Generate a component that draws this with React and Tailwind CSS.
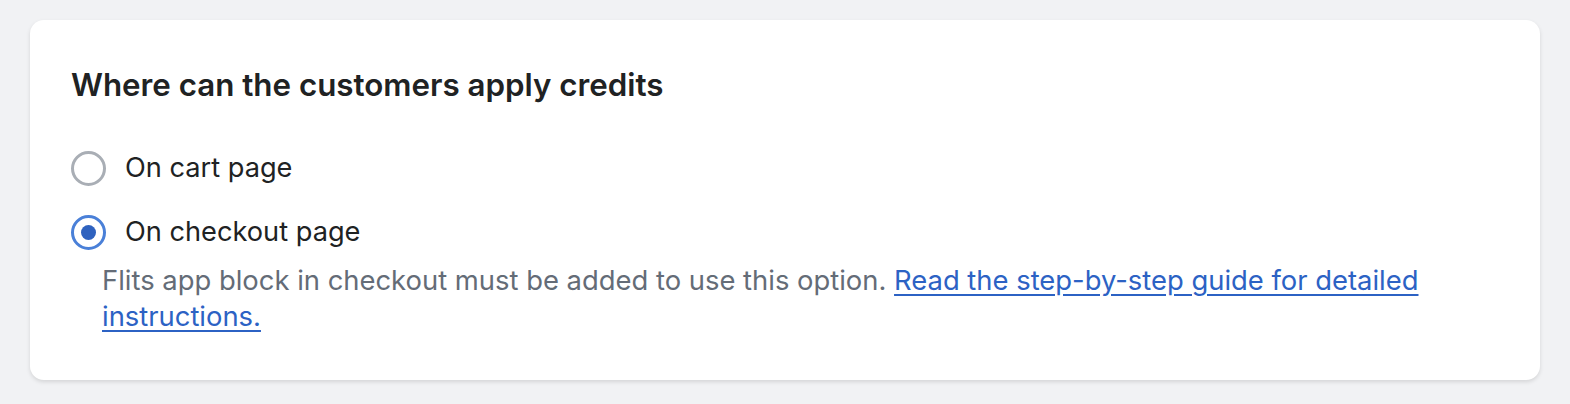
import { useState } from 'react';

function Radio({ checked, label, onChange }) {
  return (
    <label className="flex items-center gap-[19px] h-[36px] cursor-pointer">
      <span
        className={
          'w-[35px] h-[35px] shrink-0 rounded-full flex items-center justify-center border-[3px] bg-white ' +
          (checked ? 'border-[#4a80d8]' : 'border-[#a9aeb5]')
        }
      >
        {checked && <span className="w-[15px] h-[15px] rounded-full bg-[#2f62bf]" />}
      </span>
      <input type="radio" className="hidden" checked={checked} onChange={onChange} />
      <span className="text-[27.2px] leading-[36px] text-[#202223]">{label}</span>
    </label>
  );
}

export default function App() {
  const [where, setWhere] = useState('checkout');

  return (
    <div className="min-h-screen bg-[#f1f2f4] px-[30px] py-[20px] font-['Inter',sans-serif]">
      <div className="bg-white rounded-[14px] shadow-[0_2px_4px_rgba(0,0,0,0.12)] pl-[41px] pr-[40px] pt-[45px] h-[360px]">
        <h2 className="text-[31.3px] leading-[40px] font-semibold text-[#202223]">
          Where can the customers apply credits
        </h2>
        <div className="mt-[45px] flex flex-col gap-[28px]">
          <Radio checked={where === 'cart'} label="On cart page" onChange={() => setWhere('cart')} />
          <div>
            <Radio checked={where === 'checkout'} label="On checkout page" onChange={() => setWhere('checkout')} />
            <p className="mt-[12px] ml-[31px] text-[27.4px] leading-[36px] text-[#646c77]">
              Flits app block in checkout must be added to use this option.{' '}
              <a href="#" className="text-[#2c62c4] underline underline-offset-[4px]">
                Read the step-by-step guide for detailed instructions.
              </a>
            </p>
          </div>
        </div>
      </div>
    </div>
  );
}
